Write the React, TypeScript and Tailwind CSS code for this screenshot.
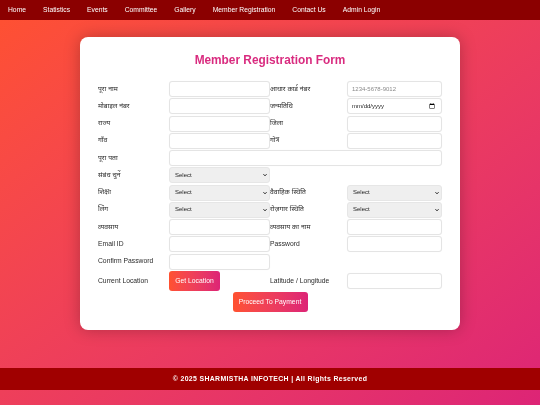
const inputCls =
  "box-border block h-[16px] w-full rounded-[3px] border border-[#e4e4e4] bg-white px-[4px] text-[6px] text-[#222] shadow-[0_0_1px_rgba(0,0,0,0.06)] outline-none placeholder:text-[#8a8a8a] [&::-webkit-datetime-edit-text]:p-0 [&::-webkit-datetime-edit-month-field]:p-0 [&::-webkit-datetime-edit-day-field]:p-0 [&::-webkit-datetime-edit-year-field]:p-0";
const selectCls =
  "box-border block h-[16px] w-full appearance-none rounded-[3px] border border-[#e6e6e6] bg-[#efefef] pl-[5px] text-[6px] text-[#222] outline-none";
const labelCls = "flex h-[16px] items-center text-[6.75px] leading-none text-[#2b2b2b]";
const btnCls =
  "block h-[20px] rounded-[3px] bg-gradient-to-r from-[#ff512f] to-[#dd2476] text-[6.75px] text-white";

const navItems = [
  "Home",
  "Statistics",
  "Events",
  "Committee",
  "Gallery",
  "Member Registration",
  "Contact Us",
  "Admin Login",
];

function Label({ children }: { children: React.ReactNode }) {
  return <label className={labelCls}>{children}</label>;
}

function Field({ placeholder }: { placeholder?: string }) {
  return <input type="text" placeholder={placeholder} className={inputCls} />;
}

function Choice() {
  return (
    <div className="relative">
      <select className={selectCls}>
        <option>Select</option>
      </select>
      <svg
        viewBox="0 0 8 8"
        className="pointer-events-none absolute top-[6px] right-[3px] h-[4px] w-[4px]"
        fill="none"
        stroke="#111"
        strokeWidth="2"
      >
        <path d="M1 2.5 L4 5.5 L7 2.5" />
      </svg>
    </div>
  );
}

export default function App() {
  return (
    <div className="flex min-h-[405px] w-[540px] flex-col overflow-hidden bg-gradient-to-br from-[#ff512f] to-[#dd2476] font-['Liberation_Sans','Noto_Sans',sans-serif] will-change-transform">
      <nav className="flex h-[20px] items-center gap-[17px] bg-[#8b0000] pl-[8px] text-[6.75px] text-white">
        {navItems.map((item) => (
          <a key={item} href="#" className="leading-none">
            {item}
          </a>
        ))}
      </nav>

      <main className="mx-[80px] mt-[17px] h-[293px] rounded-[8px] bg-white px-[18px] pt-[18px] shadow-[0_0_16px_rgba(0,0,0,0.25)]">
        <h1 className="h-[26px] text-center text-[11.85px] leading-[11px] font-bold text-[#d92b7f]">
          Member Registration Form
        </h1>

        <div className="grid grid-cols-[71px_101px_77px_95px] items-start gap-y-[1.25px]">
          <Label>पूरा नाम</Label>
          <Field />
          <Label>आधार कार्ड नंबर</Label>
          <Field placeholder="1234-5678-9012" />

          <Label>मोबाइल नंबर</Label>
          <Field />
          <Label>जन्मतिथि</Label>
          <input type="date" className={inputCls} />

          <Label>राज्य</Label>
          <Field />
          <Label>जिला</Label>
          <Field />

          <Label>गाँव</Label>
          <Field />
          <Label>गोत्र</Label>
          <Field />

          <Label>पूरा पता</Label>
          <div className="col-span-3">
            <Field />
          </div>

          <Label>संबंध चुनें</Label>
          <Choice />
          <div className="col-span-2" />

          <Label>शिक्षा</Label>
          <Choice />
          <Label>वैवाहिक स्थिति</Label>
          <Choice />

          <Label>लिंग</Label>
          <Choice />
          <Label>रोज़गार स्थिति</Label>
          <Choice />

          <Label>व्यवसाय</Label>
          <Field />
          <Label>व्यवसाय का नाम</Label>
          <Field />

          <Label>Email ID</Label>
          <Field />
          <Label>Password</Label>
          <Field />

          <Label>Confirm Password</Label>
          <Field />
          <div className="col-span-2" />

          <div className="flex h-[20px] items-center text-[6.75px] text-[#2b2b2b]">Current Location</div>
          <div>
            <button className={`${btnCls} w-[51px]`}>Get Location</button>
          </div>
          <div className="flex h-[20px] items-center text-[6.75px] text-[#2b2b2b]">Latitude / Longitude</div>
          <div className="flex h-[20px] items-center">
            <Field />
          </div>
        </div>

        <div className="mt-[1px] flex justify-center">
          <button className={`${btnCls} w-[75px]`}>Proceed To Payment</button>
        </div>
      </main>

      <footer className="mt-[38px] flex h-[22px] items-center justify-center bg-[#a00000] text-[6.9px] font-bold tracking-[0.35px] text-white">
        © 2025 SHARMISTHA INFOTECH | All Rights Reserved
      </footer>
    </div>
  );
}
